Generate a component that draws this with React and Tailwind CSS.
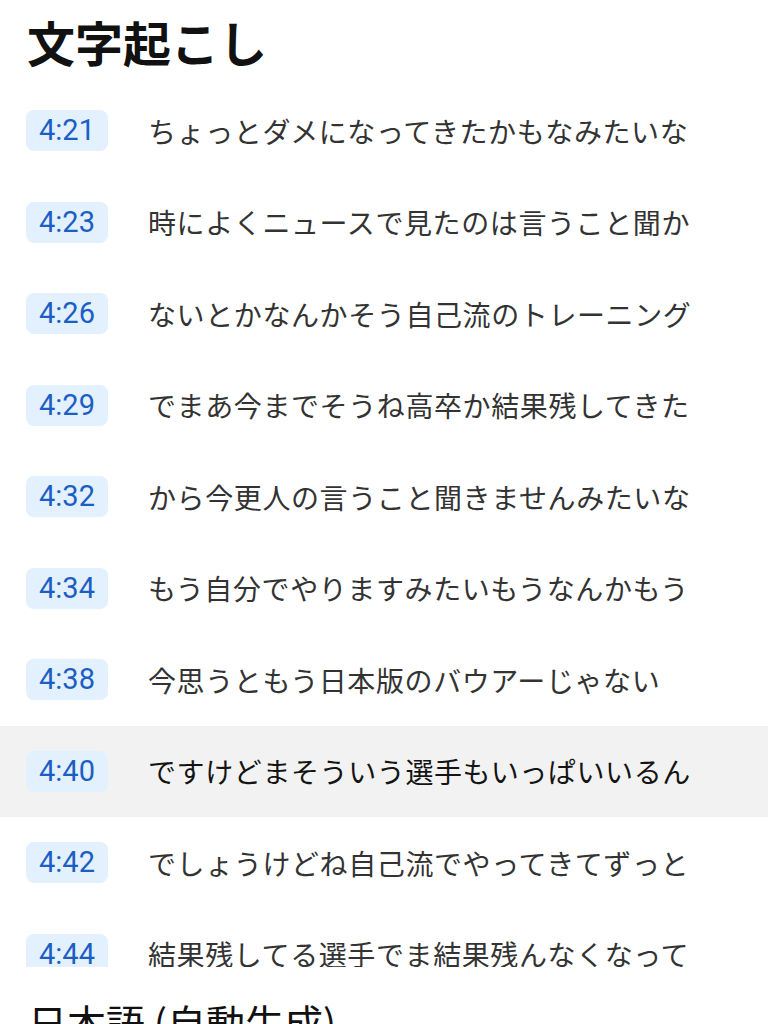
const lines = [
  { time: '4:21', text: 'ちょっとダメになってきたかもなみたいな' },
  { time: '4:23', text: '時によくニュースで見たのは言うこと聞か' },
  { time: '4:26', text: 'ないとかなんかそう自己流のトレーニング' },
  { time: '4:29', text: 'でまあ今までそうね高卒か結果残してきた' },
  { time: '4:32', text: 'から今更人の言うこと聞きませんみたいな' },
  { time: '4:34', text: 'もう自分でやりますみたいもうなんかもう' },
  { time: '4:38', text: '今思うともう日本版のバウアーじゃない' },
  { time: '4:40', text: 'ですけどまそういう選手もいっぱいいるん', active: true },
  { time: '4:42', text: 'でしょうけどね自己流でやってきてずっと' },
  { time: '4:44', text: '結果残してる選手でま結果残んなくなって' },
]

export default function App() {
  return (
    <div className="w-[768px] h-[1024px] overflow-hidden bg-white font-['Noto_Sans_CJK_JP',sans-serif]">
      <div className="h-[85px] px-[27px] pt-[11px]">
        <h1 className="text-[48px] leading-[60px] font-bold text-[#111]">文字起こし</h1>
      </div>

      <div className="h-[882px] overflow-hidden">
        {lines.map((line) => (
          <div
            key={line.time}
            className={`h-[91.5px] flex items-center pl-[26px] ${line.active ? 'bg-[#f2f2f2]' : ''}`}
          >
            <span className="w-[82px] h-[41px] shrink-0 rounded-[8px] bg-[#e3f0fd] flex items-center justify-center text-[29px] text-[#1c5fc4] font-['Roboto',sans-serif]">
              {line.time}
            </span>
            <span className={`ml-[40px] text-[28px] tracking-[0.6px] whitespace-nowrap ${line.active ? 'text-[#141414]' : 'text-[#333]'}`}>
              {line.text}
            </span>
          </div>
        ))}
      </div>

      <div className="mt-[24px] px-[28px]">
        <p className="text-[39px] leading-[60px] text-[#111]">日本語 (自動生成)</p>
      </div>
    </div>
  )
}
